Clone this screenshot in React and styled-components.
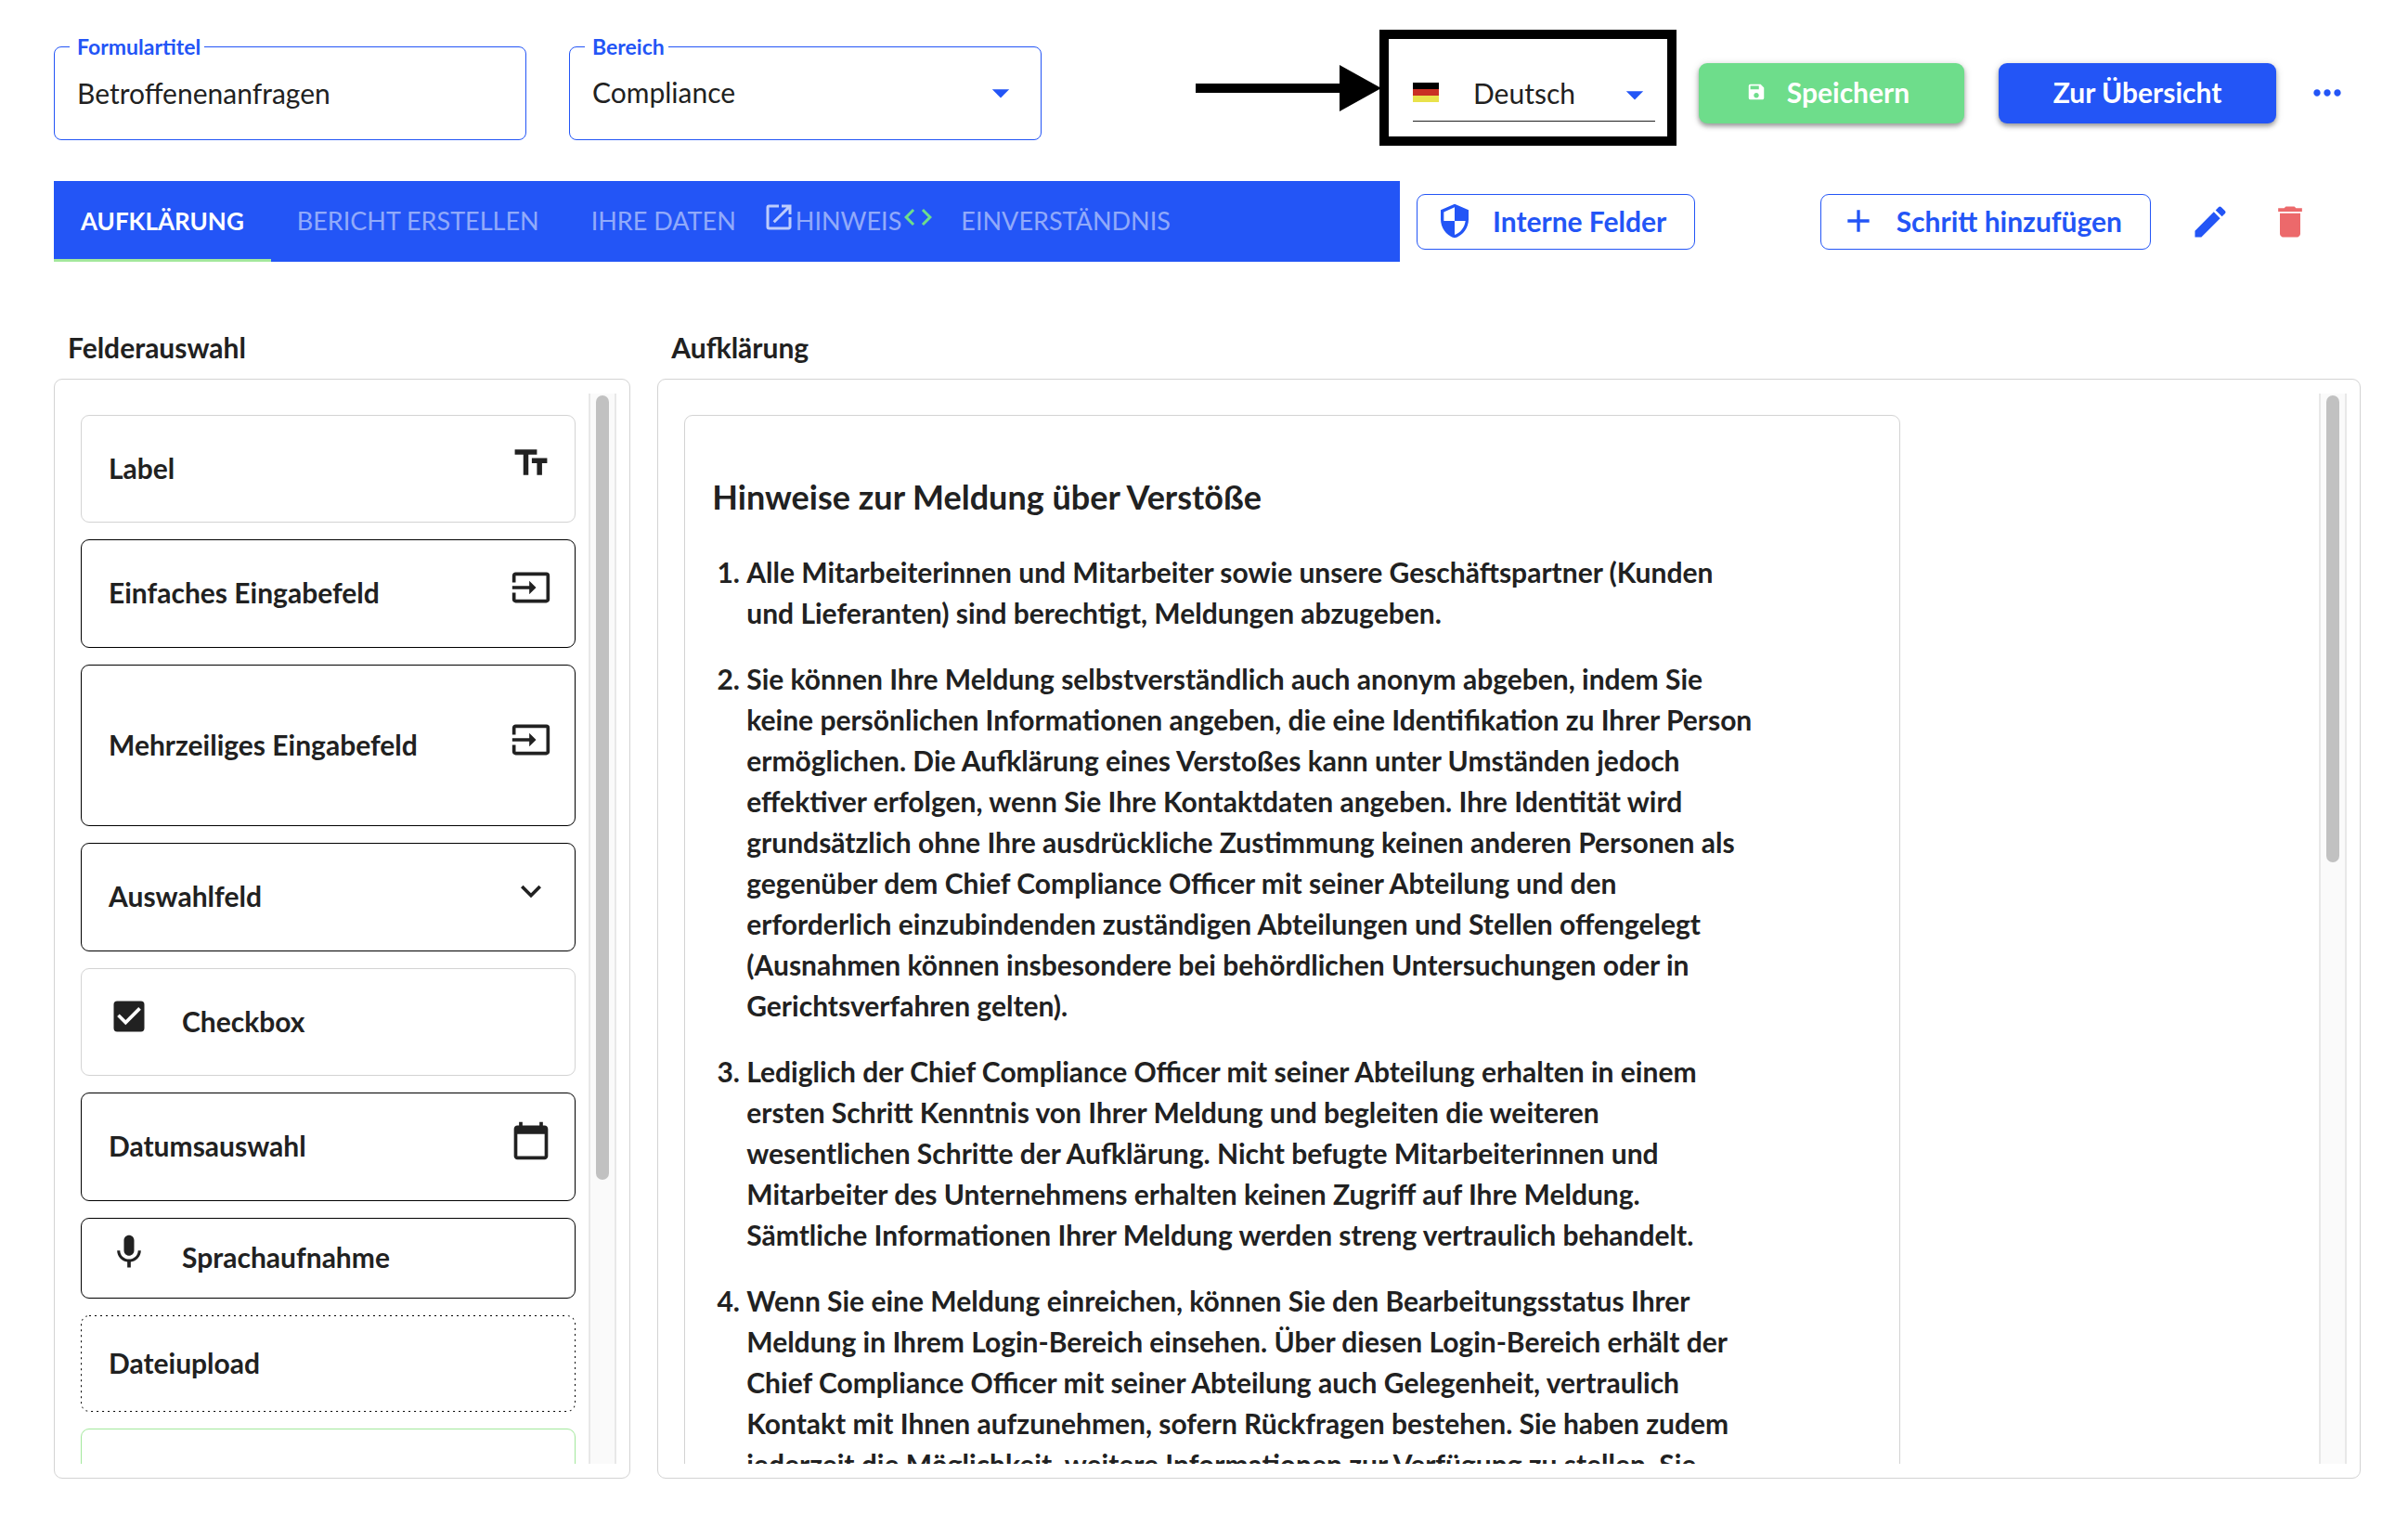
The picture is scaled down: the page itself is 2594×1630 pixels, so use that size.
import React, { useState } from "react";
import styled, { createGlobalStyle, css } from "styled-components";
import {
  MdAdd,
  MdArrowDropDown,
  MdCalendarToday,
  MdCheckBox,
  MdCode,
  MdDelete,
  MdEdit,
  MdExpandMore,
  MdInput,
  MdMic,
  MdMoreHoriz,
  MdOpenInNew,
  MdSave,
  MdSecurity,
  MdTextFields,
} from "react-icons/md";

const blue = "#2355f6";
const green = "#6edd8b";
const ink = "#212121";
const line = "#d3d3d3";

const tabs = [
  { id: "info", label: "Aufklärung" },
  { id: "report", label: "Bericht erstellen" },
  { id: "data", label: "Ihre Daten" },
  { id: "hint", label: "Hinweis", linked: true },
  { id: "consent", label: "Einverständnis" },
];

const fields = [
  { label: "Label", icon: MdTextFields, tone: "soft" },
  { label: "Einfaches Eingabefeld", icon: MdInput },
  { label: "Mehrzeiliges Eingabefeld", icon: MdInput, size: "tall" },
  { label: "Auswahlfeld", icon: MdExpandMore },
  { label: "Checkbox", icon: MdCheckBox, tone: "soft", lead: true },
  { label: "Datumsauswahl", icon: MdCalendarToday },
  { label: "Sprachaufnahme", icon: MdMic, size: "short", lead: true },
  { label: "Dateiupload", tone: "dotted", size: "medium" },
  { label: "", tone: "green", size: "medium" },
];

const notes = [
  "Alle Mitarbeiterinnen und Mitarbeiter sowie unsere Geschäftspartner (Kunden und Lieferanten) sind berechtigt, Meldungen abzugeben.",
  "Sie können Ihre Meldung selbstverständlich auch anonym abgeben, indem Sie keine persönlichen Informationen angeben, die eine Identifikation zu Ihrer Person ermöglichen. Die Aufklärung eines Verstoßes kann unter Umständen jedoch effektiver erfolgen, wenn Sie Ihre Kontaktdaten angeben. Ihre Identität wird grundsätzlich ohne Ihre ausdrückliche Zustimmung keinen anderen Personen als gegenüber dem Chief Compliance Officer mit seiner Abteilung und den erforderlich einzubindenden zuständigen Abteilungen und Stellen offengelegt (Ausnahmen können insbesondere bei behördlichen Untersuchungen oder in Gerichtsverfahren gelten).",
  "Lediglich der Chief Compliance Officer mit seiner Abteilung erhalten in einem ersten Schritt Kenntnis von Ihrer Meldung und begleiten die weiteren wesentlichen Schritte der Aufklärung. Nicht befugte Mitarbeiterinnen und Mitarbeiter des Unternehmens erhalten keinen Zugriff auf Ihre Meldung. Sämtliche Informationen Ihrer Meldung werden streng vertraulich behandelt.",
  "Wenn Sie eine Meldung einreichen, können Sie den Bearbeitungsstatus Ihrer Meldung in Ihrem Login-Bereich einsehen. Über diesen Login-Bereich erhält der Chief Compliance Officer mit seiner Abteilung auch Gelegenheit, vertraulich Kontakt mit Ihnen aufzunehmen, sofern Rückfragen bestehen. Sie haben zudem jederzeit die Möglichkeit, weitere Informationen zur Verfügung zu stellen. Sie",
];

const App = () => {
  const [title, setTitle] = useState("Betroffenenanfragen");
  const [active, setActive] = useState("info");

  return (
    <Page>
      <GlobalStyle />
      <Header>
        <Outline>
          <legend>
            <label htmlFor="form-title">Formulartitel</label>
          </legend>
          <TextInput
            id="form-title"
            value={title}
            onChange={(e) => setTitle(e.target.value)}
          />
        </Outline>
        <Outline>
          <legend>
            <label htmlFor="area">Bereich</label>
          </legend>
          <SelectBox>
            <Select id="area" defaultValue="Compliance">
              <option>Compliance</option>
            </Select>
            <Caret />
          </SelectBox>
        </Outline>

        <Actions>
          <Arrow viewBox="0 0 200 50" aria-hidden="true">
            <path d="M0 20h155V0l45 25-45 25V30H0z" />
          </Arrow>
          <LanguageFrame>
            <LanguageSelect>
              <Flag viewBox="0 0 28 21" aria-hidden="true">
                <path fill="#000" d="M0 0h28v7H0z" />
                <path fill="#c93024" d="M0 7h28v7H0z" />
                <path fill="#e9e24b" d="M0 14h28v7H0z" />
              </Flag>
              <Select aria-label="Sprache" defaultValue="Deutsch">
                <option>Deutsch</option>
              </Select>
              <Caret />
            </LanguageSelect>
          </LanguageFrame>
          <SaveButton type="button">
            <MdSave size={22} />
            Speichern
          </SaveButton>
          <OverviewButton type="button">Zur Übersicht</OverviewButton>
          <MoreButton type="button" aria-label="Mehr">
            <MdMoreHoriz size={44} />
          </MoreButton>
        </Actions>
      </Header>

      <StepBar>
        <Tabs role="tablist">
          {tabs.map((tab) => (
            <Tab
              key={tab.id}
              type="button"
              role="tab"
              aria-selected={active === tab.id}
              $active={active === tab.id}
              $linked={tab.linked}
              onClick={() => setActive(tab.id)}
            >
              {tab.linked && <MdOpenInNew size={36} />}
              {tab.label}
              {tab.linked && <MdCode size={36} color={green} />}
            </Tab>
          ))}
        </Tabs>
        <OutlineButton type="button">
          <MdSecurity size={40} />
          Interne Felder
        </OutlineButton>
        <StepActions>
          <OutlineButton type="button">
            <MdAdd size={40} />
            Schritt hinzufügen
          </OutlineButton>
          <IconButton type="button" aria-label="Bearbeiten">
            <MdEdit size={44} />
          </IconButton>
          <IconButton type="button" aria-label="Löschen" $color="#ec696b">
            <MdDelete size={44} />
          </IconButton>
        </StepActions>
      </StepBar>

      <Columns>
        <Column>
          <ColumnTitle>Felderauswahl</ColumnTitle>
          <Panel>
            <Scroll>
              <FieldList>
                {fields.map(({ label, icon: Icon, tone, size, lead }) => (
                  <FieldCard key={label} $tone={tone} $size={size} $lead={lead}>
                    <span>{label}</span>
                    {Icon && <Icon size={44} />}
                  </FieldCard>
                ))}
              </FieldList>
            </Scroll>
            <Track>
              <Thumb $height={73.5} />
            </Track>
          </Panel>
        </Column>

        <Column>
          <ColumnTitle>Aufklärung</ColumnTitle>
          <Panel>
            <Scroll>
              <Notice>
                <h3>Hinweise zur Meldung über Verstöße</h3>
                <ol>
                  {notes.map((note) => (
                    <li key={note}>{note}</li>
                  ))}
                </ol>
              </Notice>
            </Scroll>
            <Track>
              <Thumb $height={43.8} />
            </Track>
          </Panel>
        </Column>
      </Columns>
    </Page>
  );
};

export default App;

const GlobalStyle = createGlobalStyle`
  * {
    box-sizing: border-box;
  }
  body {
    margin: 0;
    background: #fff;
    color: ${ink};
    font-family: Lato, "Open Sans", sans-serif;
    font-size: 30px;
  }
  button, input, select {
    font: inherit;
    color: inherit;
  }
  button {
    cursor: pointer;
  }
  svg {
    flex: none;
    display: block;
  }
`;

const Page = styled.div`
  display: flex;
  flex-direction: column;
  height: 100vh;
  padding: 32px 51px 37px 58px;
`;

const Header = styled.header`
  display: flex;
  align-items: flex-start;
  gap: 46px;
`;

const Outline = styled.fieldset`
  flex: 0 1 509px;
  min-width: 0;
  height: 111px;
  margin: 8px 0 0;
  padding: 0;
  border: 1px solid ${blue};
  border-radius: 8px;

  legend {
    margin-left: 16px;
    padding: 0 4px 0 8px;
    color: ${blue};
    font-size: 23px;
    font-weight: 700;
    line-height: 20px;
  }
`;

const TextInput = styled.input`
  width: 100%;
  height: 80px;
  padding: 0 24px;
  border: 0;
  outline: 0;
  background: none;
`;

const SelectBox = styled.div`
  display: flex;
  align-items: center;
  height: 80px;
  padding: 0 21px 0 24px;
`;

const Select = styled.select`
  flex: 1;
  min-width: 0;
  padding: 0 0 3px;
  border: 0;
  outline: 0;
  background: none;
  appearance: none;
`;

const Caret = styled(MdArrowDropDown).attrs({ size: 44 })`
  color: ${blue};
  pointer-events: none;
`;

const Actions = styled.div`
  display: flex;
  align-items: flex-start;
  margin-left: auto;
`;

const Arrow = styled.svg`
  width: 200px;
  height: 50px;
  margin: 38px -2px 0 0;
`;

const LanguageFrame = styled.div`
  width: 320px;
  height: 125px;
  padding: 32px 13px 0 26px;
  border: 10px solid #000;
`;

const LanguageSelect = styled.div`
  display: flex;
  align-items: center;
  height: 57px;
  border-bottom: 1px solid ${ink};

  select {
    padding: 0 0 5px 37px;
  }
`;

const Flag = styled.svg`
  width: 28px;
  height: 21px;
  margin-bottom: 5px;
`;

const SolidButton = styled.button`
  display: flex;
  align-items: center;
  justify-content: center;
  height: 65px;
  margin-top: 36px;
  padding: 0 6px 3px;
  border: 0;
  border-radius: 9px;
  color: #fff;
  font-weight: 700;
  white-space: nowrap;
  box-shadow: 0 3px 5px rgba(0, 0, 0, 0.35), 0 1px 10px rgba(0, 0, 0, 0.12);
`;

const SaveButton = styled(SolidButton)`
  gap: 22px;
  width: 286px;
  margin-left: 24px;
  padding-right: 14px;
  background: ${green};
`;

const OverviewButton = styled(SolidButton)`
  width: 299px;
  margin-left: 37px;
  background: ${blue};
`;

const MoreButton = styled.button`
  margin: 46px 0 0 19px;
  padding: 0 14px;
  border: 0;
  background: none;
  color: ${blue};
`;

const StepBar = styled.div`
  display: flex;
  align-items: center;
  gap: 18px;
  margin-top: 38px;
`;

const Tabs = styled.div`
  display: flex;
  flex: 0 1 1450px;
  height: 87px;
  background: ${blue};
`;

const Tab = styled.button`
  display: flex;
  align-items: center;
  padding: 0 ${(p) => (p.$linked ? 0 : p.$active ? 29 : 28)}px 2px;
  border: 0;
  border-top: 3px solid ${blue};
  border-bottom: 3px solid ${(p) => (p.$active ? "#a3e89c" : blue)};
  background: none;
  color: ${(p) => (p.$active ? "#fff" : "rgba(255, 255, 255, 0.5)")};
  font-size: ${(p) => (p.$active ? 26 : 27)}px;
  font-weight: ${(p) => (p.$active ? 700 : 400)};
  text-transform: uppercase;
  white-space: nowrap;

  svg {
    margin-bottom: 8px;
  }
  svg:first-child {
    color: rgba(255, 255, 255, 0.7);
  }
`;

const OutlineButton = styled.button`
  display: flex;
  align-items: center;
  gap: 21px;
  height: 60px;
  padding: 0 30px 2px 20px;
  border: 1px solid ${blue};
  border-radius: 9px;
  background: none;
  color: ${blue};
  font-weight: 700;
  white-space: nowrap;
`;

const StepActions = styled.div`
  display: flex;
  align-items: center;
  gap: 42px;
  margin-left: auto;
  padding-right: 54px;
`;

const IconButton = styled.button`
  padding: 0;
  border: 0;
  background: none;
  color: ${(p) => p.$color || blue};
`;

const Columns = styled.main`
  display: grid;
  grid-template-columns: 25% minmax(0, 1fr);
  gap: 29px;
  flex: 1;
  min-height: 0;
  margin-top: 72px;
`;

const Column = styled.section`
  display: flex;
  flex-direction: column;
  min-height: 0;
`;

const ColumnTitle = styled.h2`
  margin: 0 0 14px 15px;
  font-size: 30px;
  font-weight: 700;
  line-height: 40px;
`;

const Panel = styled.div`
  display: flex;
  flex: 1;
  min-height: 0;
  padding: 15px 14px;
  border: 1px solid ${line};
  border-radius: 9px;
`;

const Scroll = styled.div`
  flex: 1;
  min-width: 0;
  padding: 23px 14px 0;
  overflow: hidden;
`;

const Track = styled.div`
  width: 30px;
  padding: 2px 6px;
  border: solid #e8e8e8;
  border-width: 0 2px;
  background: #fafafa;
`;

const Thumb = styled.div`
  height: ${(p) => p.$height}%;
  border-radius: 8px;
  background: #c1c1c1;
`;

const FieldList = styled.ul`
  display: flex;
  flex-direction: column;
  gap: 18px;
  margin: 0;
  padding: 0;
  list-style: none;
`;

const heights = { tall: 174, medium: 104, short: 87 };

const tones = {
  soft: css`
    height: 116px;
    border-color: ${line};
  `,
  // wider spacing than border-style: dotted gives
  dotted: css`
    border-color: transparent;
    background: url("data:image/svg+xml,%3Csvg xmlns='http://www.w3.org/2000/svg'%3E%3Crect width='100%25' height='100%25' rx='9' fill='none' stroke='%23000' stroke-width='2' stroke-dasharray='2 4'/%3E%3C/svg%3E")
      border-box;
  `,
  green: css`
    border-color: #a3e89c;
  `,
};

const FieldCard = styled.li`
  display: flex;
  flex: none;
  align-items: center;
  justify-content: space-between;
  height: ${(p) => heights[p.$size] || 117}px;
  padding: 0 25px 0 29px;
  border: 1px solid #000;
  border-radius: 9px;
  font-weight: 700;
  ${(p) => tones[p.$tone]}

  span {
    padding-bottom: 3px;
  }
  svg {
    margin-bottom: 13px;
  }

  /* icon in front of the text */
  ${(p) =>
    p.$lead &&
    css`
      flex-direction: row-reverse;
      justify-content: flex-end;
      gap: 35px;
    `}
`;

const Notice = styled.article`
  width: 75%;
  padding: 62px 151px 30px 29px;
  border: 1px solid ${line};
  border-radius: 9px;

  h3 {
    margin: 0 0 34px;
    font-size: 36px;
    font-weight: 700;
    line-height: 50px;
  }
  ol {
    margin: 0;
    padding-left: 37px;
    font-weight: 700;
    line-height: 44px;
  }
  li {
    margin-bottom: 27px;
  }
`;
